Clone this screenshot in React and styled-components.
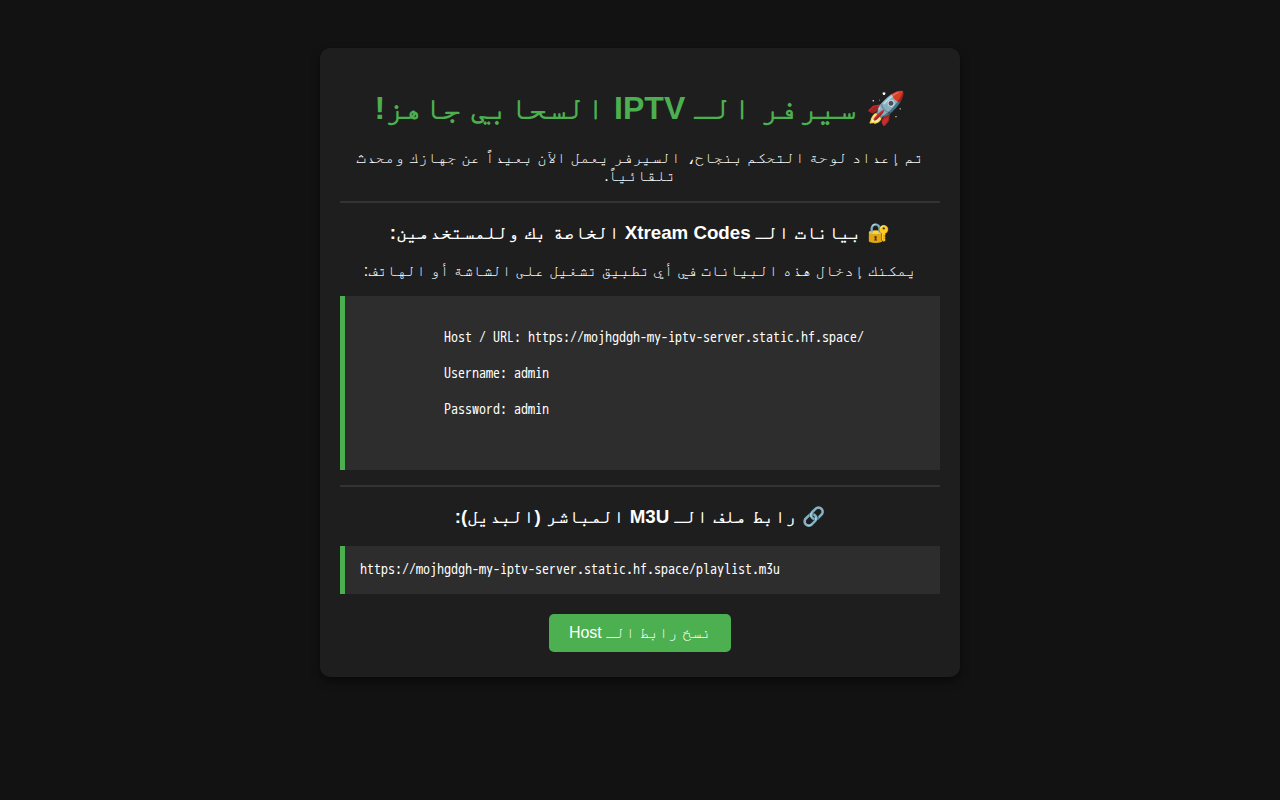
import React from "react";
import styled, { createGlobalStyle } from "styled-components";

const COLORS = {
  body: "#121212",
  card: "#1e1e1e",
  box: "#2d2d2d",
  accent: "#4caf50",
  rule: "#333333",
  text: "#ffffff",
};

const HOST = "https://mojhgdgh-my-iptv-server.static.hf.space/";
const INDENT = " ".repeat(12);

// the panel keeps its blank first and last lines
const credentials = [
  "",
  `${INDENT}Host / URL: ${HOST}`,
  "",
  `${INDENT}Username: admin`,
  "",
  `${INDENT}Password: admin`,
  "",
  INDENT,
].join("\n");

const App = () => {
  const copyHost = () => {
    navigator.clipboard.writeText(HOST);
  };

  return (
    <>
      <GlobalStyle />
      <Card dir="rtl" lang="ar">
        <Title>🚀 سيرفر الـ IPTV السحابي جاهز!</Title>
        <Text>
          تم إعداد لوحة التحكم بنجاح، السيرفر يعمل الآن بعيداً عن جهازك ومحدث
          تلقائياً.
        </Text>
        <Rule />
        <Subtitle>🔐 بيانات الـ Xtream Codes الخاصة بك وللمستخدمين:</Subtitle>
        <Text>يمكنك إدخال هذه البيانات في أي تطبيق تشغيل على الشاشة أو الهاتف:</Text>
        <CodeBox dir="ltr">{credentials}</CodeBox>
        <Rule />
        <Subtitle>🔗 رابط ملف الـ M3U المباشر (البديل):</Subtitle>
        <CodeBox dir="ltr">{`${HOST}playlist.m3u`}</CodeBox>
        <CopyButton type="button" onClick={copyHost}>
          نسخ رابط الـ Host
        </CopyButton>
      </Card>
    </>
  );
};

const GlobalStyle = createGlobalStyle`
  body {
    margin: 0;
    padding: 48px 20px;
    background-color: ${COLORS.body};
    color: ${COLORS.text};
    font-family: "Liberation Sans", "FreeMono", "DejaVu Sans Mono", sans-serif;
  }
`;

const Card = styled.main`
  box-sizing: border-box;
  max-width: 640px;
  margin: 0 auto;
  padding: 20px 20px 25px;
  border-radius: 10px;
  background-color: ${COLORS.card};
  box-shadow: 0 4px 8px rgba(0, 0, 0, 0.5);
  text-align: center;
`;

const Title = styled.h1`
  margin: 22px 0;
  color: ${COLORS.accent};
  font-size: 32px;
  line-height: 37px;
`;

const Subtitle = styled.h3`
  margin: 19px 0 18px;
  line-height: 22px;
`;

const Text = styled.p`
  margin: 16px 0;
  font-size: 16px;
  line-height: 18px;
`;

const Rule = styled.hr`
  margin: 15px 0;
  border: 0;
  border-top: 2px solid ${COLORS.rule};
`;

const CodeBox = styled.pre`
  margin: 15px 0;
  padding: 15px;
  border-left: 5px solid ${COLORS.accent};
  background-color: ${COLORS.box};
  font-family: "WenQuanYi Zen Hei Mono", "Noto Sans Mono CJK SC", monospace;
  font-size: 14px;
  line-height: 18px;
  text-align: left;
  white-space: pre-wrap;
  overflow-wrap: anywhere;
`;

const CopyButton = styled.button`
  margin-top: 5px;
  padding: 10px 20px;
  border: 0;
  border-radius: 5px;
  background-color: ${COLORS.accent};
  color: ${COLORS.text};
  font-family: inherit;
  font-size: 16px;
  line-height: 18px;
  cursor: pointer;
`;

export default App;
